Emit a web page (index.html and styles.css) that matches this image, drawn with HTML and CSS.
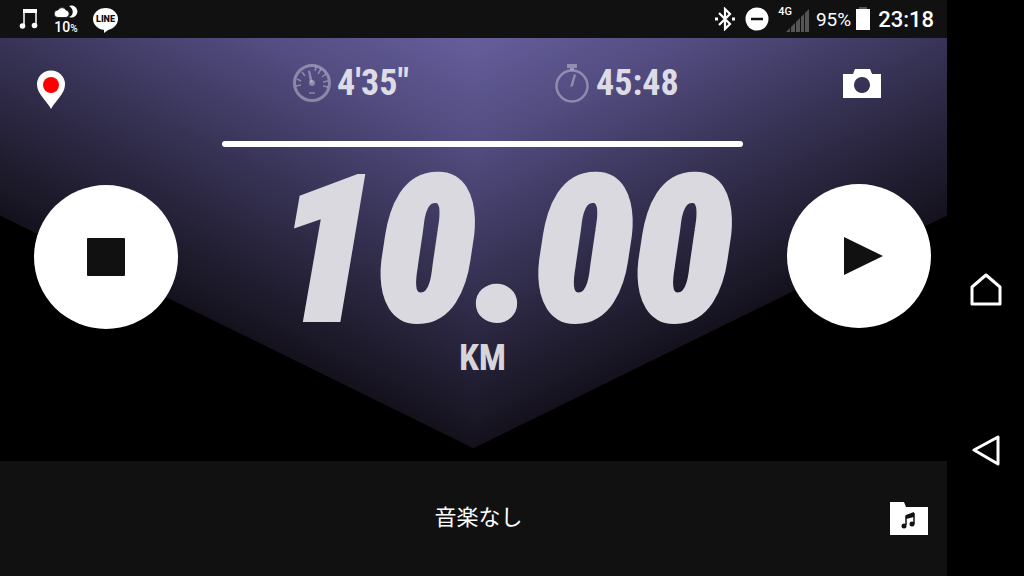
FILE: index.html
```html
<!DOCTYPE html>
<html lang="ja">
<head>
<meta charset="utf-8">
<meta name="viewport" content="width=device-width, initial-scale=1">
<title>Running</title>
<link rel="stylesheet" href="styles.css">
</head>
<body>
<div class="device">
  <div class="app">
    <header class="status">
      <div class="status-group notices">
        <svg class="note" width="20" height="22" viewBox="0 0 20 22" aria-hidden="true"><path d="M5 18V2h12v14" fill="none" stroke="#fff" stroke-width="1.500"/><path d="M4 1h14v4H4z" fill="#fff"/><circle cx="3.500" cy="18" r="2.800" fill="#fff"/><circle cx="15.500" cy="17.500" r="2.800" fill="#fff"/></svg>
        <div class="weather">
          <svg width="24" height="13" viewBox="0 0 24 13" aria-hidden="true"><path d="M15 1a6 6 0 1 1 0 11c5-2 5-8 0-11z" fill="#fff"/><path d="M4 12.500a3.800 3.800 0 0 1 0-7.600A4.600 4.600 0 0 1 12 5a3.800 3.800 0 0 1 0 7.500z" fill="#fff" stroke="#111" stroke-width=".8"/></svg>
          <span class="rain">10<small>%</small></span>
        </div>
        <div class="line-app">LINE</div>
      </div>
      <div class="status-group">
        <svg class="bluetooth" width="20" height="24" viewBox="0 0 20 24" fill="none" stroke="#fff" stroke-width="2.200" aria-hidden="true"><path d="M4 6l11 11-5 5V2l5 5L4 18"/><path d="M0 12h3M17 12h3" stroke-width="3"/></svg>
        <svg class="dnd" width="24" height="24" viewBox="0 0 24 24" aria-hidden="true"><circle cx="12" cy="12" r="11.500" fill="#fff"/><path d="M6 12h12" stroke="#111" stroke-width="2.500"/></svg>
        <div class="signal"><span>4G</span><svg width="23" height="23" viewBox="0 0 23 23" fill="#555" aria-hidden="true"><path d="M0 23l4-4v4zM5 18l4-4v9H5zM10 13l4-4v14h-4zM15 8l3-3v18h-3zM19 4l4-4v23h-4z"/></svg></div>
        <span class="percent">95%</span>
        <svg class="battery" width="16" height="24" viewBox="0 0 16 24" aria-hidden="true"><path d="M4 0h8v3H4z" fill="#555"/><path d="M1 2h14v21H1z" fill="#fff"/></svg>
        <time class="clock">23:18</time>
      </div>
    </header>

    <main class="dashboard">
      <div class="side side-left">
        <button class="icon-button" aria-label="GPS">
          <svg width="30" height="40" viewBox="0 0 30 40" aria-hidden="true"><path d="M15 39C11 31 1 24 1 14.500a14 14 0 0 1 28 0C29 24 19 31 15 39z" fill="#fff"/><circle cx="15" cy="15" r="8" fill="#f00"/></svg>
        </button>
        <button class="round-button" aria-label="Stop">
          <svg width="40" height="40" viewBox="0 0 40 40" aria-hidden="true"><rect x="1" y="1" width="38" height="38" rx="1" fill="#111"/></svg>
        </button>
      </div>

      <section class="readout">
        <div class="metrics">
          <div class="metric">
            <svg width="40" height="40" viewBox="0 0 40 40" fill="none" stroke="currentColor" aria-hidden="true"><circle cx="20" cy="20" r="17.500" stroke-width="3"/><path d="M16 8l2-.5 3 12h-3z" fill="currentColor" stroke="none"/><circle cx="20" cy="20" r="3" fill="currentColor" stroke="none"/><path d="M17 30h6M4 23l5-1M5 16l4 2M10 9l3 4M24 4l-1 4M29 6l-3 5M34 11l-4 3M36 18l-5 1M36 24l-5-1" stroke-width="1.500"/></svg>
            <span>4'35"</span>
          </div>
          <div class="metric">
            <svg width="36" height="40" viewBox="0 0 36 40" fill="none" stroke="currentColor" aria-hidden="true"><circle cx="17" cy="23" r="15.500" stroke-width="2.500"/><path d="M12 1h10v4h-3v2h-4V5h-3z" fill="currentColor" stroke="none"/><path d="M19 11l2 1-3 11-3 1z" fill="currentColor" stroke="none"/></svg>
            <span>45:48</span>
          </div>
        </div>
        <div class="progress" role="progressbar" aria-label="Distance" aria-valuenow="100"></div>
        <div class="distance">10.00</div>
        <div class="unit">KM</div>
      </section>

      <div class="side side-right">
        <button class="icon-button" aria-label="Camera">
          <svg width="40" height="30" viewBox="0 0 40 30" aria-hidden="true"><path fill-rule="evenodd" fill="#fff" d="M1 5h10l2-5h15l2 5h9v24H1zM20 8a8 8 0 1 0 .01 0z"/></svg>
        </button>
        <button class="round-button" aria-label="Start">
          <svg width="50" height="40" viewBox="0 0 50 40" aria-hidden="true"><path d="M10 1l39 19-39 19z" fill="#111"/></svg>
        </button>
      </div>
    </main>

    <footer class="music">
      <span class="track">音楽なし</span>
      <button class="icon-button folder" aria-label="音楽">
        <svg width="40" height="36" viewBox="0 0 40 36" aria-hidden="true"><path d="M1 2h14l2 5h22v28H1z" fill="#fff"/><path d="M17 25v-9l8-2v10" fill="none" stroke="#111" stroke-width="1.500"/><path d="M17 15l8-3v5l-8 2z" fill="#111"/><circle cx="15" cy="26" r="2.500" fill="#111"/><circle cx="23" cy="24" r="2.500" fill="#111"/></svg>
      </button>
    </footer>
  </div>

  <nav class="system-nav">
    <button class="icon-button" aria-label="Home">
      <svg width="32" height="34" viewBox="0 0 32 34" fill="none" stroke="#fff" stroke-width="3" stroke-linejoin="round" aria-hidden="true"><path d="M2 14L16 2l14 12v17H2z"/></svg>
    </button>
    <button class="icon-button" aria-label="Back">
      <svg width="32" height="32" viewBox="0 0 32 32" fill="none" stroke="#fff" stroke-width="3" stroke-linejoin="round" aria-hidden="true"><path d="M28 2v27L4 15z"/></svg>
    </button>
  </nav>
</div>
</body>
</html>
```
FILE: styles.css
```css
* { box-sizing: border-box; }

body {
  margin: 0;
  background: #000;
  color: #fff;
  font-family: Roboto, "Noto Sans CJK JP", sans-serif;
}

button {
  border: 0;
  padding: 0;
  background: none;
  color: inherit;
  cursor: pointer;
}

svg { display: block; flex: none; }

.device {
  display: grid;
  grid-template-columns: 1fr 77px;
  min-height: 100vh;
}

.app {
  display: grid;
  grid-template-rows: 38px 1fr 20vh;
}

.status {
  display: flex;
  justify-content: space-between;
  align-items: center;
  padding: 0 13px 0 19px;
  background: #111;
}

.status-group { display: flex; align-items: center; }
.notices { gap: 14px; }

.weather {
  display: flex;
  flex-direction: column;
  align-items: center;
  gap: 2px;
  width: 26px;
  padding-top: 2px;
}

.rain { font: 500 14px/14px Roboto, sans-serif; }
.rain small { font-size: 10px; }

.line-app {
  position: relative;
  width: 25px;
  height: 22px;
  border-radius: 50%;
  background: #fff;
  color: #111;
  font: 900 9px/22px Roboto, sans-serif;
  text-align: center;
}

.line-app::after {
  content: "";
  position: absolute;
  left: 11px;
  top: 20px;
  border-top: 5px solid #fff;
  border-right: 7px solid transparent;
}

.dnd { margin: 0 9px 0 10px; }

.signal {
  display: flex;
  align-items: flex-start;
  height: 28px;
}

.signal span { font: 500 11px/14px Roboto, sans-serif; }
.signal svg { margin: 4px 7px 0 -6px; }
.percent { font-size: 19px; }
.battery { margin: 0 7px 0 4px; }
.clock { font-size: 22px; font-weight: 500; }

.dashboard {
  position: relative;
  display: grid;
  grid-template-columns: 222px 1fr 204px;
  isolation: isolate;
}

.dashboard::before {
  content: "";
  position: absolute;
  inset: 0;
  z-index: -1;
  background:
    linear-gradient(26deg, #14111c 37%, #322e4d 60%, #524c80 83%, #655e9b) left / calc(50% + 1px) 100% no-repeat,
    linear-gradient(-26deg, #14111c 37%, #322e4d 60%, #524c80 83%, #655e9b) right / calc(50% + 1px) 100% no-repeat;
  clip-path: polygon(0 0, 100% 0, 100% 42%, 50% 97%, 0 42%);
}

.side {
  display: flex;
  flex-direction: column;
  align-items: flex-start;
}

.side-left { padding: 32px 0 0 34px; gap: 75px; }
.side-left .icon-button { padding-left: 2px; }
.side-right { padding: 31px 0 0 44px; gap: 85px; }
.side-right .icon-button { padding-left: 55px; }

.round-button {
  display: grid;
  place-items: center;
  width: 144px;
  height: 144px;
  border-radius: 50%;
  background: #fff;
}

.readout {
  display: flex;
  flex-direction: column;
  align-items: center;
  padding-top: 23px;
  color: #dddce6;
}

.metrics {
  display: grid;
  grid-template-columns: 7fr 5fr;
  width: 100%;
  padding-left: 70px;
}

.metric {
  display: flex;
  align-items: center;
  gap: 5px;
  height: 44px;
  font: 700 36px/40px "Roboto Condensed", "Liberation Sans Narrow", "Liberation Sans", sans-serif;
}

.metric svg { color: rgba(255, 255, 255, 0.35); }

.progress {
  align-self: stretch;
  height: 6px;
  margin-top: 36px;
  border-radius: 3px;
  background: #fff;
}

.distance {
  margin-top: 24px;
  padding-left: 44px;
  color: #dad9e0;
  font: italic 900 200px/160px "Roboto Condensed", Roboto, sans-serif;
  -webkit-text-stroke: 6px #dad9e0;
}

.unit {
  margin-top: 4px;
  color: #d6d5da;
  font: 700 36px/46px "Roboto Condensed", "Liberation Sans Narrow", "Liberation Sans", sans-serif;
}

.music {
  display: grid;
  grid-template-columns: 1fr auto 1fr;
  align-items: center;
  padding: 0 18px 0 28px;
  background: #111;
}

.track {
  grid-column: 2;
  padding-bottom: 6px;
  font: 400 22px/32px "Noto Sans CJK JP", sans-serif;
}

.folder { justify-self: end; }

.system-nav {
  display: flex;
  flex-direction: column;
  align-items: center;
  justify-content: flex-end;
  gap: 128px;
  padding-bottom: 109px;
  background: #000;
}
```
